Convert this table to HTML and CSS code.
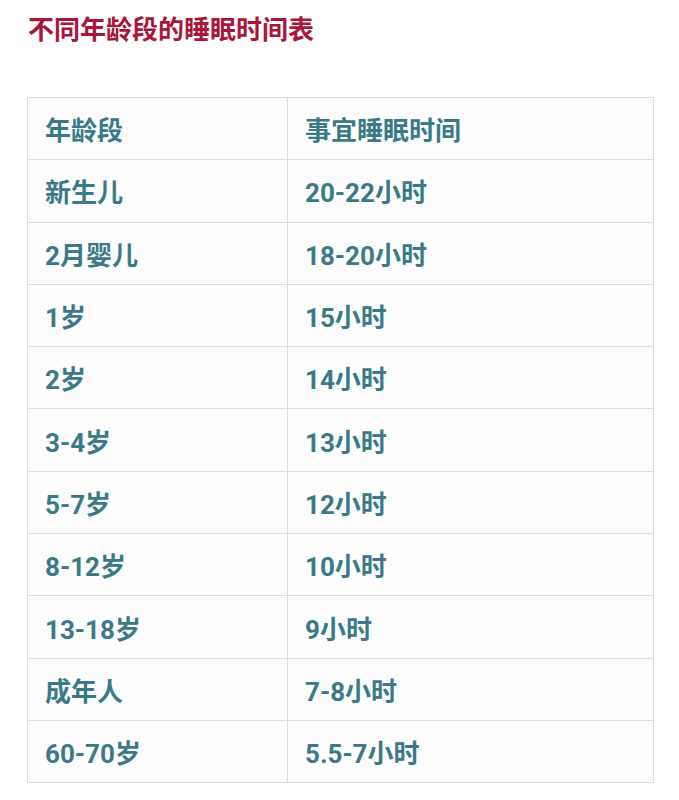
FILE: index.html
```html
<!DOCTYPE html>
<html lang="zh-CN">
<head>
<meta charset="utf-8">
<title>不同年龄段的睡眠时间表</title>
<link rel="stylesheet" href="styles.css">
</head>
<body>
<div class="page">
  <h1 class="title">不同年龄段的睡眠时间表</h1>
  <table class="sleep">
    <tr><td class="c1">年龄段</td><td>事宜睡眠时间</td></tr>
    <tr><td class="c1">新生儿</td><td>20-22小时</td></tr>
    <tr><td class="c1">2月婴儿</td><td>18-20小时</td></tr>
    <tr><td class="c1">1岁</td><td>15小时</td></tr>
    <tr><td class="c1">2岁</td><td>14小时</td></tr>
    <tr><td class="c1">3-4岁</td><td>13小时</td></tr>
    <tr><td class="c1">5-7岁</td><td>12小时</td></tr>
    <tr><td class="c1">8-12岁</td><td>10小时</td></tr>
    <tr><td class="c1">13-18岁</td><td>9小时</td></tr>
    <tr><td class="c1">成年人</td><td>7-8小时</td></tr>
    <tr><td class="c1">60-70岁</td><td>5.5-7小时</td></tr>
  </table>
</div>
</body>
</html>
```
FILE: styles.css
```css
html, body {
  margin: 0;
  padding: 0;
  background: #ffffff;
}
.page {
  padding: 15px 0 0 27px;
  font-family: "Roboto", "Noto Sans CJK SC", sans-serif;
}
.title {
  margin: 0 0 51px 1px;
  font-size: 26px;
  line-height: 31px;
  font-weight: 700;
  letter-spacing: 0;
  color: #a8173a;
}
.sleep {
  border-collapse: collapse;
  width: 627px;
  table-layout: fixed;
  background: #fdfdfe;
}
.sleep td {
  border: 1px solid #dcdce2;
  height: 62.3px;
  padding: 0 0 0 17px;
  font-size: 26px;
  font-weight: 700;
  color: #3a7a86;
  vertical-align: middle;
  box-sizing: border-box;
}
.sleep td.c1 {
  width: 260px;
}
```
